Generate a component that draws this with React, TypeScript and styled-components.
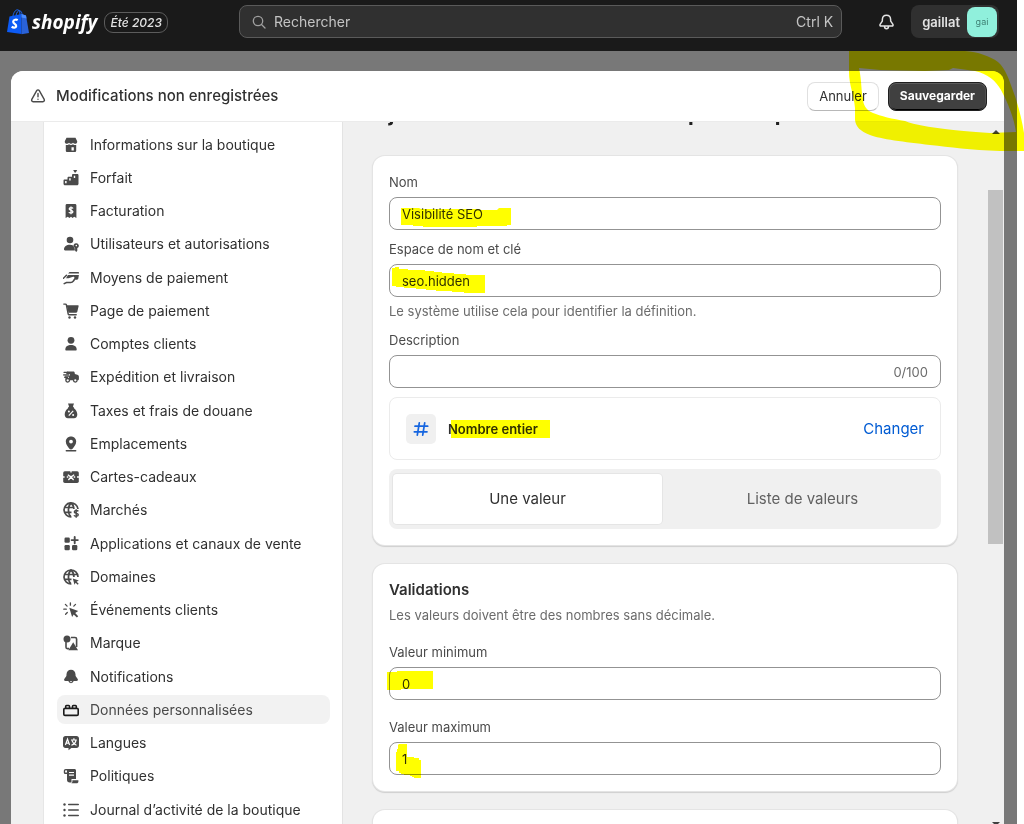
import React, { useState } from "react";
import styled, { createGlobalStyle, css } from "styled-components";

const GlobalStyle = createGlobalStyle`
  *, *::before, *::after { box-sizing: border-box; }
  body {
    margin: 0;
    background: #fff;
    color: #303030;
    font-family: Inter, "Liberation Sans", sans-serif;
    font-size: 13px;
    line-height: 20px;
  }
  h1, h2, p, ul { margin: 0; padding: 0; }
  button, input { font: inherit; color: inherit; }
`;

const Page = styled.div`
  position: relative;
  height: 100vh;
  display: flex;
  flex-direction: column;
  padding-right: 7px;
  overflow: hidden;
`;

/* ---------- Top bar ---------- */

const TopBar = styled.header`
  flex: none;
  height: 51px;
  display: flex;
  align-items: flex-start;
  background: #1a1a1a;
  padding: 5px 18px 0 7px;
`;

const Brand = styled.a`
  flex: 0 0 232px;
  display: flex;
  align-items: center;
  height: 34px;
  color: #fff;
  text-decoration: none;
`;

const Wordmark = styled.span`
  margin-left: 3px;
  font: italic 700 19px/28px "Open Sans", sans-serif;
`;

const Edition = styled.span`
  margin-left: 7px;
  height: 21px;
  padding: 0 5px;
  border: 1px solid #5c5c5c;
  border-radius: 9px;
  font-size: 12px;
  font-style: italic;
  font-weight: 500;
  line-height: 19px;
  color: #e3e3e3;
`;

const SearchButton = styled.button`
  flex: 1;
  height: 33px;
  display: flex;
  align-items: center;
  gap: 8px;
  padding: 0 8px 0 12px;
  border: 1px solid #5a5a5a;
  border-radius: 8px;
  background: #303030;
  color: #c4c4c4;
  font-size: 14px;
`;

const Shortcut = styled.kbd`
  margin-left: auto;
  font: inherit;
`;

const BellButton = styled.button`
  display: flex;
  margin: 9px 16px 0 36px;
  padding: 0;
  border: 0;
  background: none;
  color: #e3e3e3;
`;

const StoreButton = styled.button`
  height: 33px;
  display: flex;
  align-items: center;
  gap: 7px;
  padding: 0 2px 0 11px;
  border: 0;
  border-radius: 8px;
  background: #303030;
  color: #e3e3e3;
  font-size: 13px;
  font-weight: 600;
`;

const Avatar = styled.span`
  width: 30px;
  height: 30px;
  border-radius: 8px;
  background: #90f0dc;
  color: #3e8074;
  font-size: 9px;
  font-weight: 400;
  line-height: 30px;
  text-align: center;
`;

/* ---------- Modal ---------- */

const Backdrop = styled.div`
  flex: 1;
  min-height: 0;
  display: flex;
  padding: 20px 13px 0 11px;
  background: #787878;
`;

const Modal = styled.section`
  flex: 1;
  min-width: 0;
  display: flex;
  flex-direction: column;
  border-radius: 12px 12px 0 0;
  background: #f0f0f0;
  overflow: hidden;
`;

const SaveBar = styled.div`
  flex: none;
  height: 51px;
  display: flex;
  align-items: center;
  gap: 9px;
  padding: 0 17px 0 19px;
  background: #fff;
  border-bottom: 1px solid #ebebeb;
`;

const SaveTitle = styled.h1`
  flex: 1;
  margin-left: 1px;
  font-size: 15px;
  font-weight: 500;
  line-height: 22px;
`;

const Action = styled.button<{ $primary?: boolean }>`
  height: 29px;
  padding: 0 11px;
  border-radius: 8px;
  border: 1px solid #e0e0e0;
  border-bottom-color: #b8b8b8;
  background: #fff;
  font-size: 13px;
  line-height: 20px;
  ${(p) =>
    p.$primary &&
    css`
      border-color: #1f1f1f;
      background: #404040;
      color: #fff;
      font-size: 12px;
      font-weight: 700;
      box-shadow: inset 0 1px 0 #5c5c5c, inset 1px 0 0 #505050, inset -1px 0 0 #505050, inset 0 -1px 0 #000;
    `}
`;

const Body = styled.div`
  flex: 1;
  min-height: 0;
  display: flex;
  padding-left: 32px;
`;

const Sidebar = styled.nav`
  flex: 0 0 300px;
  padding: 8px 12px 0 13px;
  background: #fff;
  border-right: 1px solid #e3e3e3;
  border-left: 1px solid #e6e6e6;
  overflow: hidden;
`;

const NavList = styled.ul`
  height: 694px;
  display: flex;
  flex-direction: column;
  justify-content: space-between;
  list-style: none;
`;

const NavLink = styled.a<{ $active?: boolean }>`
  height: 29px;
  display: flex;
  align-items: center;
  gap: 11px;
  padding: 0 6px;
  border-radius: 8px;
  font-size: 14px;
  white-space: nowrap;
  color: ${(p) => (p.$active ? "#4a4a4a" : "#303030")};
  background: ${(p) => (p.$active ? "#f2f2f2" : "transparent")};
  text-decoration: none;
  svg { color: ${(p) => (p.$active ? "#1a1a1a" : "#4a4a4a")}; }
`;

const Main = styled.main`
  flex: 1;
  min-width: 0;
  padding: 0 30px;
  overflow: hidden;
`;

const PageTitle = styled.h2`
  margin: -22px 0 28px;
  font-size: 21px;
  font-weight: 700;
  line-height: 28px;
  white-space: nowrap;
  color: #202020;
`;

const Card = styled.section`
  display: flex;
  flex-direction: column;
  gap: 9px;
  margin-bottom: 19px;
  padding: 16px;
  border-radius: 12px;
  background: #fff;
  box-shadow: 0 0 0 1px #e4e4e4, 0 1px 1px 1px #cfcfcf;
`;

const ValidationCard = styled(Card)`
  gap: 17px;
`;

const Field = styled.div`
  position: relative;
  display: flex;
  flex-direction: column;
`;

const Label = styled.label`
  margin-bottom: 5px;
  color: #4a4a4a;
`;

const InputBox = styled.div`
  position: relative;
  height: 33px;
  display: flex;
  align-items: center;
  padding: 0 12px;
  border: 1px solid #939393;
  border-radius: 8px;
  background: #fff;
`;

const Input = styled.input`
  flex: 1;
  min-width: 0;
  padding: 0;
  border: 0;
  outline: 0;
  background: transparent;
  color: #303030;
`;

const Counter = styled.span`
  color: #6b6b6b;
`;

const Help = styled.p`
  margin-top: 4px;
  color: #6b6b6b;
`;

const TypeRow = styled.div`
  height: 63px;
  display: flex;
  align-items: center;
  gap: 12px;
  padding: 0 16px;
  border: 1px solid #ebebeb;
  border-radius: 8px;
`;

const TypeIcon = styled.span`
  width: 30px;
  height: 30px;
  display: grid;
  place-items: center;
  border-radius: 5px;
  background: #f0f0f0;
`;

const TypeName = styled.strong`
  position: relative;
  font-weight: 600;
`;

const LinkButton = styled.button`
  margin-left: auto;
  padding: 0;
  border: 0;
  background: none;
  color: #005bd3;
  font-size: 15px;
`;

const Segments = styled.div`
  display: flex;
  gap: 6px;
  padding: 5px 4px;
  border-radius: 8px;
  background: #f0f0f0;
`;

const Segment = styled.button<{ $on: boolean }>`
  flex: 1;
  height: 50px;
  border: 0;
  border-radius: 4px;
  font-size: 15px;
  background: ${(p) => (p.$on ? "#fff" : "transparent")};
  box-shadow: ${(p) => (p.$on ? "0 0 0 1px #e5e5e5" : "none")};
  color: ${(p) => (p.$on ? "#303030" : "#616161")};
`;

const CardTitle = styled.h2`
  font-size: 15px;
  font-weight: 600;
  line-height: 20px;
  margin-bottom: 5px;
`;

const Muted = styled.p`
  color: #6b6b6b;
`;

const ScrollTrack = styled.div`
  flex: 0 0 17px;
  display: flex;
  flex-direction: column;
  align-items: center;
  padding-top: 7px;
`;

const ScrollThumb = styled.div`
  width: 15px;
  height: 51%;
  margin: 56px 1px auto 0;
  background: #c1c1c1;
`;

/* ---------- Highlighter strokes ---------- */

const Stroke = styled.svg<{ $x: number; $y: number }>`
  position: absolute;
  left: ${(p) => p.$x}px;
  top: ${(p) => p.$y}px;
  fill: #ff0;
  mix-blend-mode: multiply;
  pointer-events: none;
`;

const Loop = styled.svg`
  position: absolute;
  top: 51px;
  right: 0;
  fill: #ff0;
  mix-blend-mode: multiply;
  pointer-events: none;
`;

type Mark = { x: number; y: number; w: number; h: number; d: string };

const Highlight = ({ mark }: { mark: Mark }) => (
  <Stroke $x={mark.x} $y={mark.y} width={mark.w} height={mark.h} aria-hidden="true">
    <path d={mark.d} />
  </Stroke>
);

const marks: Record<string, Mark> = {
  name: { x: 11, y: 9, w: 111, h: 20, d: "M0 1H18L20 2H78L80 3H96L98 1H110V18H106V19H76V20H22V19H12V18H0Z" },
  key: { x: 2, y: 1, w: 94, h: 28, d: "M0 2H3V1H7V3H16V4H33V5H42V6H50V7H62V8H74V9H93V27H72V26H60V25H44V24H34V23H24V22H12V21H4V20H0Z" },
  type: { x: 3, y: 1, w: 99, h: 18, d: "M0 0H99V18H0Z" },
  min: { x: -3, y: 2, w: 47, h: 20, d: "M0 2H10V1H46V19H14V20H0Z" },
  max: { x: 6, y: 1, w: 26, h: 34, d: "M2 1L3 0H11V13H18V14H23V16H25V34H18V33H16V32H14V31H8V30H5V29H3V27H0V8H1V5H2Z" },
};

/* ---------- Icons ---------- */

const glyphs: Record<string, React.ReactNode> = {
  store: (
    <>
      <path d="M3.500 .8h9l1.700 3.400c.3 1.400-.7 2.600-2.100 2.600-.9 0-1.600-.4-2.100-1.100-.5.700-1.200 1.100-2 1.100s-1.500-.4-2-1.100c-.5.700-1.200 1.100-2.100 1.100-1.400 0-2.400-1.200-2.100-2.600z" />
      <path fillRule="evenodd" d="M2.800 8c1.300.2 2.400-.1 3.200-.8 1.200.9 2.800.9 4 0 .8.700 1.900 1 3.200.8v5.500c0 .9-.7 1.600-1.600 1.600H4.400c-.9 0-1.600-.7-1.600-1.600zm5.700 2.200v3.300h2.300v-3.300z" />
    </>
  ),
  plan: (
    <>
      <path fillRule="evenodd" d="M1.500 9.500h3V8c0-.8.5-1.300 1.200-1.300H9V5.300c0-.7.5-1.200 1.200-1.200h4c.8 0 1.300.5 1.300 1.200v8.500c0 .9-.6 1.500-1.500 1.500H2c-.9 0-1.500-.6-1.500-1.500v-3c0-.8.4-1.300 1-1.300zm.6 1.600v2.200h1.500v-2.200zM6.200 8.300v2.200h1.500V8.300zm4.600-2.600v2.200h1.400V5.700z" />
      <path d="M10.200 0h4l-1.400 2.600h-1.200z" />
    </>
  ),
  bill: (
    <>
      <path d="M4 1h8c.8 0 1.400.6 1.400 1.400V15l-2.200-1.200L9.600 15 8 13.800 6.400 15l-1.600-1.200L2.600 15V2.400C2.600 1.600 3.200 1 4 1z" />
      <path d="M10 5.400C9.600 4.500 6.200 4.200 6.200 6c0 1.600 3.700.9 3.700 2.700 0 1.700-3.600 1.500-4 .4M8 3.500v7.700" fill="none" stroke="#fff" strokeWidth="1.300" />
    </>
  ),
  users: (
    <>
      <circle cx="7" cy="4" r="3.300" />
      <path d="M1 13.600C1 10.400 3.500 8.700 6.800 8.700c1.500 0 2.700.3 3.700 1 .2 1.400.8 2.200 1.300 2.700v2H2c-.6 0-1-.4-1-.8z" />
      <path fillRule="evenodd" d="M13.300 7.200a2.500 2.500 0 0 1 1 4.800v2.800l-1.100 1.200-1.100-1.200V12a2.500 2.500 0 0 1 1.200-4.800zm0 1.600a.8.800 0 1 0 0 1.600.8.800 0 0 0 0-1.600z" />
    </>
  ),
  pay: (
    <>
      <path d="M6.500 2H15c.6 0 1 .4 1 1v.6H5.200zM5 5h10.900l-.6 3.600c-.1.700-.6 1.100-1.200 1.100h-3.600l.8-1.500c.5-.9-.3-1.700-1.200-1.400L5.500 8.300H3z" />
      <path d="M.4 8.300 3.500 5.200M1.200 13.600l2.300-1.100h4.200c1.200 0 2-.5 2.700-1.500l.9-1.300" fill="none" stroke="currentColor" strokeWidth="1.500" strokeLinecap="round" />
    </>
  ),
  cart: (
    <>
      <path d="M3.700 2.200h11.100c.6 0 1 .5.800 1l-1.300 5.600c-.2.600-.7 1-1.400 1H5.500z" />
      <path d="M.8 1.100h1.500c.6 0 1 .3 1.100.9L5.200 11c.1.500.5.800 1 .8h7" fill="none" stroke="currentColor" strokeWidth="1.400" strokeLinecap="round" />
      <circle cx="6.500" cy="14.500" r="1.200" />
      <circle cx="12" cy="14.500" r="1.200" />
    </>
  ),
  person: (
    <>
      <circle cx="8" cy="4.300" r="3.400" />
      <path d="M2.300 13.500c0-2.900 2.500-4.400 5.700-4.400s5.700 1.500 5.700 4.400c0 .6-.4 1-1 1H3.300c-.6 0-1-.4-1-1z" />
    </>
  ),
  truck: (
    <>
      <path d="M4 2.600h6.300c.7 0 1.200.4 1.300 1l.3 1.300 2.400.8c1 .3 1.600 1 1.600 2v2.200c0 .9-.5 1.400-1.300 1.400H2.500v-2.300H6V7.700H1.600V6.500H7V5.200H3z" />
      <path d="M1 3.300h4M.6 5.900h5M1.700 8.400h3" stroke="currentColor" strokeWidth="1.200" strokeLinecap="round" />
      <circle cx="4.700" cy="11.300" r="1.800" fill="#fff" stroke="currentColor" strokeWidth="1.300" />
      <circle cx="12.300" cy="11.300" r="1.800" fill="#fff" stroke="currentColor" strokeWidth="1.300" />
    </>
  ),
  tax: (
    <>
      <path d="M5 .6h6L10.100 3v1.200h.9v1.100c2 1.200 3.300 3.900 3.300 6.300 0 2.200-1.300 3.700-3.300 3.700H5c-2 0-3.300-1.500-3.300-3.700C1.700 9.200 3 6.500 5 5.300V4.200h.9V3z" />
      <path d="m5.800 12.600 4.400-4.700" stroke="#fff" strokeWidth="1.200" />
      <circle cx="5.900" cy="8.500" r="1" fill="#fff" />
      <circle cx="10.100" cy="12" r="1" fill="#fff" />
    </>
  ),
  pin: (
    <>
      <path fillRule="evenodd" d="M8 .5c3 0 5.200 2.200 5.200 5.100 0 3-2.200 5.500-3.600 7.100-.9 1-2.300 1-3.200 0C5 11.100 2.800 8.600 2.800 5.600 2.800 2.700 5 .5 8 .5zm0 3.200a1.900 1.900 0 1 0 0 3.800 1.900 1.900 0 0 0 0-3.800z" />
      <path d="M3.300 14.800h9.400" stroke="currentColor" strokeWidth="1.400" strokeLinecap="round" />
    </>
  ),
  gift: (
    <>
      <rect x=".2" y="2.300" width="15.600" height="11.600" rx="1.600" />
      <path d="M8 8 4.800 5.700M8 8l3.200-2.300M8 8l-2.600 3M8 8l2.600 3M3.800 8h1.500M10.700 8h1.500M0 8h1.600M14 8h2M8 2v1.600" fill="none" stroke="#fff" strokeWidth="1.300" />
      <circle cx="8" cy="8" r="1.300" fill="#fff" />
    </>
  ),
  market: (
    <>
      <path d="M8.400 14.900A7 7 0 1 1 15 7M1 5.500h9.500M1 10.300h7.500M8 1C4.600 4 4.600 12 8 15M8 1c1.900 1.500 2.800 3.800 2.900 6" fill="none" stroke="currentColor" strokeWidth="1.700" />
      <path d="M15.300 9.300c-.7-1.200-4-1-4 .6 0 1.800 4 .8 4 2.900 0 1.800-3.600 1.900-4.300.5M13.200 7.300v8.400" fill="none" stroke="currentColor" strokeWidth="1.400" />
    </>
  ),
  apps: (
    <>
      <rect x="1.500" y="1.500" width="5.300" height="5.300" rx="1.200" />
      <rect x="1.500" y="9" width="5.300" height="5.300" rx="1.200" />
      <rect x="9" y="9" width="5.300" height="5.300" rx="1.200" />
      <path d="M11.700 1v6.200M8.600 4.100h6.200" stroke="currentColor" strokeWidth="1.900" strokeLinecap="round" />
    </>
  ),
  domain: (
    <>
      <path d="M8.400 15A7 7 0 1 1 15 7.900M1 5.500h13.400M1 10.300h7.500M8 1C4.600 4 4.600 12 8 15M8 1c1.900 1.500 2.900 4.200 2.900 7" fill="none" stroke="currentColor" strokeWidth="1.700" />
      <path d="m9.800 9.500 6 2-2.200 1.300 2.100 2-1 1-2.100-2-1.100 2z" />
    </>
  ),
  click: (
    <>
      <path d="m6.300 5.800 8.900 3.300-3 1.900 3 3.200-1.300 1.400-3.200-3.200-1.600 2.700z" />
      <path d="M7.400.9v2.300M2.400 2.400l1.700 1.700M.8 7.200h2.500M2.600 12.200l1.700-1.700M12.500 2.400l-1.700 1.700" stroke="currentColor" strokeWidth="1.300" strokeLinecap="round" />
    </>
  ),
  brand: (
    <>
      <circle cx="4" cy="4" r="3.500" />
      <path d="M8 2.500h4c1 0 1.600.6 1.600 1.600v8M3 7v5.300c0 .8.500 1.300 1.300 1.300H6" fill="none" stroke="currentColor" strokeWidth="1.600" />
      <path d="M10.200 7.200 15 15.200H5.400z" />
    </>
  ),
  bell: (
    <path d="M8 .7c2.600 0 4.400 1.900 4.500 4.500l.1 1.900 2.100 3c.6 1-.1 2-1.200 2H10.700a2.800 2.800 0 0 1-5.400 0H2.500c-1.100 0-1.800-1-1.200-2l2.100-3 .1-1.900C3.600 2.600 5.400.7 8 .7zM6.800 12.200c.3 1.300 2.100 1.300 2.400 0z" fillRule="evenodd" />
  ),
  brick: (
    <path d="M2 6.400h12c.8 0 1.200.4 1.200 1.200v4.600c0 .8-.4 1.200-1.200 1.200H2c-.8 0-1.200-.4-1.200-1.200V7.600c0-.8.4-1.200 1.200-1.200zM2.700 6V4.300c0-.5.300-.8.800-.8h2.200c.5 0 .8.300.8.800V6m3 0V4.300c0-.5.300-.8.800-.8h2.200c.5 0 .8.300.8.800V6" fill="none" stroke="currentColor" strokeWidth="1.600" />
  ),
  lang: (
    <>
      <path d="M2.500.9h11C15 .9 16 1.900 16 3.400v7c0 1.500-1 2.500-2.500 2.500H8.300l-2.800 2.400V12.900h-3C1 12.900 0 11.900 0 10.400v-7C0 1.900 1 .9 2.500.9z" />
      <path d="m2.400 10 2.100-6 2.100 6M3.100 8.200h2.800M8 5h5.800M10.900 3.300V5M13 5.200c-.3 2.200-2 4.200-4.600 5M9 5.600c.7 2.200 2.300 3.800 4.500 4.600" fill="none" stroke="#fff" strokeWidth="1.200" />
    </>
  ),
  policy: (
    <>
      <path fillRule="evenodd" d="M2.800.9h8.600c1 0 1.600.7 1.600 1.600V11H8.500v3.500H6.700C5 14.500 4 13.500 4 11.800V6H2.300C1.300 6 .8 5.400.8 4.500V3c0-1.300.8-2.100 2-2.100zM3 2.300c-.6 0-.9.400-.9.900v1.300H4V3.200c0-.5-.4-.9-1-.9zm3 1.600v1.200h5V3.900zm0 2.600v1.200h5V6.500z" />
      <path d="M9.400 12.200h6v1.200c0 1-.7 1.900-1.900 1.900H7.600c1.200 0 1.800-.9 1.800-1.900z" />
    </>
  ),
  list: (
    <>
      <path d="M5.700 2.500h9.600M5.700 8h9.600M5.700 13.500h9.600" stroke="currentColor" strokeWidth="1.500" strokeLinecap="round" />
      <circle cx="1.500" cy="2.500" r="1.200" />
      <circle cx="1.500" cy="8" r="1.200" />
      <circle cx="1.500" cy="13.500" r="1.200" />
    </>
  ),
};

const Icon = ({ name }: { name: string }) => (
  <svg width="16" height="16" viewBox="0 0 16 16" fill="currentColor" aria-hidden="true">
    {glyphs[name]}
  </svg>
);

const BagLogo = () => (
  <svg width="22" height="26" viewBox="0 0 22 26" aria-hidden="true">
    <path d="M6 7C6.500 3.500 8.500.8 10.500.8S13 3 13 6M9 6.500c.5-3 2-5 3.500-4.800C14.500 2 15 4 15 6" fill="none" stroke="#1d6bff" strokeWidth="1" />
    <path d="M2.500 7.500 14.500 5v20L0 23z" fill="#0d5bf5" />
    <path d="M14.500 5l4.500 1.500L22 24l-7.500 1.300z" fill="#2a62d8" />
    <path d="M14.500 5l4.500 1.500.5 3-5-1z" fill="#4a8cff" />
    <path d="M10.700 11.200c-1.200-.8-4.400-.8-4.500 1.500-.1 2.100 3.200 2.300 3 4.400-.2 2-3 1.900-4.500.6" fill="none" stroke="#fff" strokeWidth="2.200" />
  </svg>
);

const navItems = [
  ["store", "Informations sur la boutique"],
  ["plan", "Forfait"],
  ["bill", "Facturation"],
  ["users", "Utilisateurs et autorisations"],
  ["pay", "Moyens de paiement"],
  ["cart", "Page de paiement"],
  ["person", "Comptes clients"],
  ["truck", "Expédition et livraison"],
  ["tax", "Taxes et frais de douane"],
  ["pin", "Emplacements"],
  ["gift", "Cartes-cadeaux"],
  ["market", "Marchés"],
  ["apps", "Applications et canaux de vente"],
  ["domain", "Domaines"],
  ["click", "Événements clients"],
  ["brand", "Marque"],
  ["bell", "Notifications"],
  ["brick", "Données personnalisées"],
  ["lang", "Langues"],
  ["policy", "Politiques"],
  ["list", "Journal d’activité de la boutique"],
];

type TextFieldProps = {
  id: string;
  label: string;
  initial?: string;
  mark?: Mark;
  help?: string;
  limit?: number;
};

const TextField = ({ id, label, initial = "", mark, help, limit }: TextFieldProps) => {
  const [value, setValue] = useState(initial);
  return (
    <Field>
      <Label htmlFor={id}>{label}</Label>
      <InputBox>
        <Input id={id} value={value} maxLength={limit} onChange={(e) => setValue(e.target.value)} />
        {limit && <Counter>{`${value.length}/${limit}`}</Counter>}
        {mark && <Highlight mark={mark} />}
      </InputBox>
      {help && <Help>{help}</Help>}
    </Field>
  );
};

export default function App() {
  const [single, setSingle] = useState(true);
  return (
    <>
      <GlobalStyle />
      <Page>
        <TopBar>
          <Brand href="#">
            <BagLogo />
            <Wordmark>shopify</Wordmark>
            <Edition>Été 2023</Edition>
          </Brand>
          <SearchButton type="button">
            <svg width="14" height="14" viewBox="0 0 14 14" fill="none" stroke="#a0a0a0" strokeWidth="1.300" strokeLinecap="round" aria-hidden="true">
              <circle cx="6" cy="6" r="4.700" />
              <path d="m9.500 9.500 3.500 3.500" />
            </svg>
            Rechercher
            <Shortcut>Ctrl K</Shortcut>
          </SearchButton>
          <BellButton type="button" aria-label="Notifications">
            <svg width="17" height="17" viewBox="0 0 17 17" fill="none" stroke="currentColor" strokeWidth="1.500" strokeLinejoin="round" aria-hidden="true">
              <path d="M8.500 1.200c2.300 0 4 1.700 4.100 4l.1 2 2.200 3.200c.5.800 0 1.600-.9 1.600H3c-.9 0-1.400-.8-.9-1.600l2.200-3.200.1-2c.1-2.300 1.800-4 4.100-4zM6.500 12.200c0 3.400 4 3.400 4 0" />
            </svg>
          </BellButton>
          <StoreButton type="button">
            gaillat
            <Avatar>gai</Avatar>
          </StoreButton>
        </TopBar>

        <Backdrop>
          <Modal>
            <SaveBar>
              <svg width="16" height="16" viewBox="0 0 16 16" fill="none" stroke="#4a4a4a" strokeWidth="1.400" strokeLinecap="round" aria-hidden="true">
                <path d="M6.700 2.600 1.800 11.400c-.6 1.100.1 2.300 1.300 2.300h9.800c1.200 0 1.900-1.200 1.300-2.300L9.300 2.600c-.6-1-2-1-2.600 0zM8 5.500v3.300M8 11.200v.1" />
              </svg>
              <SaveTitle>Modifications non enregistrées</SaveTitle>
              <Action type="button">Annuler</Action>
              <Action type="button" $primary>Sauvegarder</Action>
            </SaveBar>

            <Body>
              <Sidebar aria-label="Paramètres">
                <NavList>
                  {navItems.map(([icon, text]) => (
                    <li key={text}>
                      <NavLink href="#" $active={icon === "brick"}>
                        <Icon name={icon} />
                        {text}
                      </NavLink>
                    </li>
                  ))}
                </NavList>
              </Sidebar>

              <Main>
                <PageTitle>Ajouter une définition de champs méta produit</PageTitle>
                <Card>
                  <TextField id="name" label="Nom" initial="Visibilité SEO" mark={marks.name} />
                  <TextField id="key" label="Espace de nom et clé" initial="seo.hidden" mark={marks.key} help="Le système utilise cela pour identifier la définition." />
                  <TextField id="description" label="Description" limit={100} />
                  <TypeRow>
                    <TypeIcon>
                      <svg width="16" height="16" viewBox="0 0 16 16" fill="none" stroke="#1565e0" strokeWidth="1.700" strokeLinecap="round" aria-hidden="true">
                        <path d="M6.300 1.800 4.300 14.200M11.700 1.800l-2 12.400M2 5.200h12.700M1.300 10.800H14" />
                      </svg>
                    </TypeIcon>
                    <TypeName>
                      Nombre entier
                      <Highlight mark={marks.type} />
                    </TypeName>
                    <LinkButton type="button">Changer</LinkButton>
                  </TypeRow>
                  <Segments>
                    <Segment type="button" $on={single} onClick={() => setSingle(true)}>Une valeur</Segment>
                    <Segment type="button" $on={!single} onClick={() => setSingle(false)}>Liste de valeurs</Segment>
                  </Segments>
                </Card>

                <ValidationCard>
                  <div>
                    <CardTitle>Validations</CardTitle>
                    <Muted>Les valeurs doivent être des nombres sans décimale.</Muted>
                  </div>
                  <TextField id="min" label="Valeur minimum" initial="0" mark={marks.min} />
                  <TextField id="max" label="Valeur maximum" initial="1" mark={marks.max} />
                </ValidationCard>

                <Card />
              </Main>

              <ScrollTrack aria-hidden="true">
                <svg width="8" height="5" viewBox="0 0 8 5"><path d="M0 5 4 1l4 4z" fill="#404040" /></svg>
                <ScrollThumb />
                <svg width="8" height="2" viewBox="0 0 8 2"><path d="M0 0h8L6 2H2z" fill="#404040" /></svg>
              </ScrollTrack>
            </Body>
          </Modal>
        </Backdrop>

        <Loop width="175" height="100" viewBox="849 51 175 100" aria-hidden="true">
          <path
            fillRule="evenodd"
            d="M849 51H965C978 52 990 56 998 62C1006 69 1009 80 1012 88C1018 103 1022 120 1024 133V151H1000C970 150 950 147 930 145C905 142 880 139 870 135C860 131 856 127 855 120V108C854 95 849 85 849 72ZM859 68L880 70L925 71L949 70L953 68L975 71C988 74 996 81 1001 90C1008 103 1014 118 1016 132L990 133C970 132 955 130 945 129C930 127 915 125 905 121C893 119 880 116 873 113C866 110 863 105 863 98C861 92 862 82 859 68Z"
          />
        </Loop>
      </Page>
    </>
  );
}
